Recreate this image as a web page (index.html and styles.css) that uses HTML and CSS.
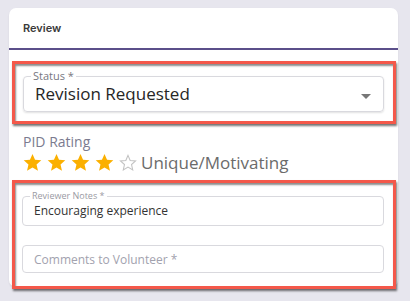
FILE: index.html
```
<!DOCTYPE html>
<html>
<head>
    <title>Review</title>
    <meta charset="utf-8">
    <link rel="stylesheet" href="styles.css">
</head>
<body>

<div class="card">
    <div class="card-header">Review</div>
    <div class="card-body">
        <div class="highlight first-highlight">
            <fieldset class="field select-field">
                <legend>Status *</legend>
                <div class="select-value">Revision Requested</div>
                <span class="select-arrow"></span>
            </fieldset>
        </div>

        <div class="rating">
            <div class="rating-label">PID Rating</div>
            <div class="rating-row">
                <svg class="star" viewBox="0 0 24 24"><path d="M12 1.2l3.2 7.3 7.9.7-6 5.3 1.8 7.8L12 18.2l-6.9 4.1 1.8-7.8-6-5.3 7.9-.7z"/></svg>
                <svg class="star" viewBox="0 0 24 24"><path d="M12 1.2l3.2 7.3 7.9.7-6 5.3 1.8 7.8L12 18.2l-6.9 4.1 1.8-7.8-6-5.3 7.9-.7z"/></svg>
                <svg class="star" viewBox="0 0 24 24"><path d="M12 1.2l3.2 7.3 7.9.7-6 5.3 1.8 7.8L12 18.2l-6.9 4.1 1.8-7.8-6-5.3 7.9-.7z"/></svg>
                <svg class="star" viewBox="0 0 24 24"><path d="M12 1.2l3.2 7.3 7.9.7-6 5.3 1.8 7.8L12 18.2l-6.9 4.1 1.8-7.8-6-5.3 7.9-.7z"/></svg>
                <svg class="star star-empty" viewBox="0 0 24 24"><path d="M12 2.5l2.9 6.7 7.2.7-5.4 4.8 1.6 7.1L12 18l-6.3 3.8 1.6-7.1-5.4-4.8 7.2-.7z"/></svg>
                <span class="rating-text">Unique/Motivating</span>
            </div>
        </div>

        <div class="highlight second-highlight">
            <fieldset class="field notes-field">
                <legend>Reviewer Notes *</legend>
                <div class="notes-value">Encouraging experience</div>
            </fieldset>
            <div class="field comments-field">Comments to Volunteer *</div>
        </div>
    </div>
</div>

</body>
</html>
```

FILE: styles.css
```
body, html {
    margin: 0; padding: 0;
}
body {
    background: #e7e6ee;
    font-family: 'Open Sans', sans-serif;
    width: 410px;
    height: 301px;
    overflow: hidden;
}
.card {
    margin: 8px 12px 0 9px;
    background: #fff;
    border-radius: 7px;
    height: 279px;
    box-shadow: 0 1px 2px rgba(0, 0, 0, 0.08);
}
.card-header {
    height: 40px;
    padding-left: 14px;
    display: flex;
    align-items: center;
    font-family: 'Inter', sans-serif;
    font-weight: 600;
    font-size: 11px;
    color: #3a3a3a;
    border-bottom: 2px solid #5b4f8a;
}
.card-body {
    padding: 11px 2px 0 3px;
}
.highlight {
    border: 3px solid #f4584a;
    box-shadow: inset 1px 2px 2px rgba(0, 0, 0, 0.45), 1px 2px 2px rgba(0, 0, 0, 0.55);
}
.first-highlight {
    padding: 6px 9px 9px 8px;
}
.second-highlight {
    padding: 8px 9px 13px 7px;
    margin-top: 6px;
}
.field {
    margin: 0;
    border: 1px solid #d9d9de;
    border-radius: 4px;
    min-width: 0;
}
.field legend {
    margin-left: -4px;
    padding: 0 2px;
}
.select-field {
    position: relative;
    padding: 0 10px 5px 11px;
    box-shadow: 0 1px 2px rgba(0, 0, 0, 0.12);
}
.select-field legend {
    font-size: 11px;
    line-height: 12px;
    color: #77777f;
}
.select-value {
    font-size: 17px;
    line-height: 24px;
    color: #262626;
}
.select-arrow {
    position: absolute;
    right: 12px;
    top: 12px;
    width: 0;
    height: 0;
    border-left: 5px solid transparent;
    border-right: 5px solid transparent;
    border-top: 5px solid #777;
}
.rating {
    padding: 9px 0 0 11px;
}
.rating-label {
    font-size: 14px;
    line-height: 18px;
    color: #7b7b8f;
}
.rating-row {
    display: flex;
    align-items: center;
    height: 23px;
}
.star {
    width: 19px;
    height: 19px;
    fill: #fbb000;
    margin-right: 5px;
}
.star-empty {
    fill: none;
    stroke: #c2c2c2;
    stroke-width: 1.4;
    width: 18px;
    margin-right: 4px;
}
.rating-text {
    font-size: 17px;
    color: #6b6b6b;
}
.notes-field {
    padding: 0 10px 4px 11px;
}
.notes-field legend {
    font-size: 9px;
    line-height: 10px;
    color: #9a9aa3;
}
.notes-value {
    font-size: 12px;
    line-height: 20px;
    color: #333;
}
.comments-field {
    margin-top: 19px;
    height: 26px;
    padding-left: 11px;
    display: flex;
    align-items: center;
    font-size: 12px;
    color: #a2a2ae;
}
```
